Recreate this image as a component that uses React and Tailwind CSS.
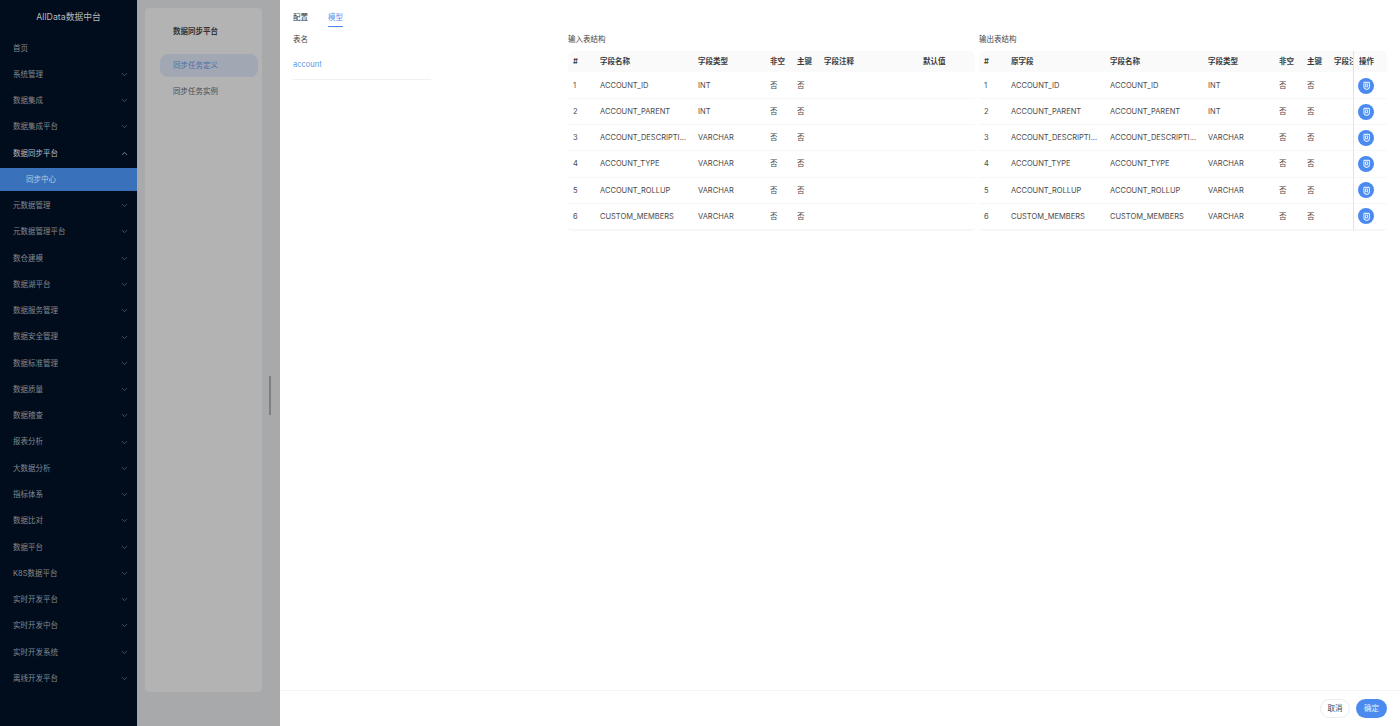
import React from "react";
import { ChevronDown, ChevronUp } from "lucide-react";

const menus = [
  "首页", "系统管理", "数据集成", "数据集成平台", "数据同步平台", "同步中心", "元数据管理", "元数据管理平台",
  "数仓建模", "数据湖平台", "数据服务管理", "数据安全管理", "数据标准管理", "数据质量", "数据稽查", "报表分析",
  "大数据分析", "指标体系", "数据比对", "数据平台", "K8S数据平台", "实时开发平台", "实时开发中台", "实时开发系统", "离线开发平台",
];

const rows = [
  ["ACCOUNT_ID", "INT"],
  ["ACCOUNT_PARENT", "INT"],
  ["ACCOUNT_DESCRIPTI...", "VARCHAR"],
  ["ACCOUNT_TYPE", "VARCHAR"],
  ["ACCOUNT_ROLLUP", "VARCHAR"],
  ["CUSTOM_MEMBERS", "VARCHAR"],
];

const Sidebar = () => (
  <div className="w-[137px] shrink-0 bg-[#010d1c] h-full">
    <div className="h-[35px] flex items-center justify-center text-[8.75px] text-[#b5b9be]">AllData数据中台</div>
    {menus.map((m, i) => {
      if (m === "同步中心") {
        return (
          <div key={m} className="h-[23px] my-[1.64px] pl-[26px] flex items-center bg-[#3a71bb] text-[#b9c9df]">
            {m}
          </div>
        );
      }
      const open = m === "数据同步平台";
      return (
        <div
          key={m}
          className={`h-[26.28px] pl-[13px] pr-[8px] flex items-center justify-between ${open ? "text-[#b8bcc1]" : "text-[#83888f]"}`}
        >
          <span>{m}</span>
          {i > 0 && (open ? <ChevronUp size={9} className="text-[#a5a9ae]" /> : <ChevronDown size={9} className="text-[#5d636c]" />)}
        </div>
      );
    })}
  </div>
);

const Backdrop = () => (
  <div className="w-[143px] shrink-0 h-full bg-[#a8a9aa] relative pt-2 pl-2">
    <div className="w-[117px] h-[684px] bg-[#b3b3b3] rounded-sm">
      <div className="h-[47px] pl-[28px] flex items-center font-semibold text-[#333537]">数据同步平台</div>
      <div className="mt-[-1px] ml-[15px] mr-1 h-[23px] rounded-lg pl-[13px] flex items-center bg-[#a2a8b3] text-[#4c6ea8]">同步任务定义</div>
      <div className="mt-[3px] h-[23px] pl-[28px] flex items-center text-[#4a4b4d]">同步任务实例</div>
    </div>
    <div className="absolute left-[132px] top-[376px] w-[2px] h-[39px] bg-[#7d7e80]" />
  </div>
);

const Cell = ({ children, head }) => (
  <div className={`flex items-center pl-[5px] whitespace-nowrap overflow-hidden ${head ? "font-semibold text-[#3a3a3a]" : "text-[#4a4a4a]"}`}>
    {children}
  </div>
);

const CopyIcon = () => (
  <svg width="9" height="9" viewBox="0 0 10 10" fill="none" stroke="#dbe8fd" strokeWidth="1.2">
    <path d="M2 1.5h5.5a.8.8 0 0 1 .8.8v4.2c0 1.2-1.6 2.6-3 2.9-1.6-.3-3.2-1.5-3.2-2.9V1.5z" />
    <rect x="3.8" y="3.4" width="2.4" height="3" rx=".4" />
  </svg>
);

const InputTable = () => (
  <div className="w-[407px] rounded-b-md border-b border-[#f5f5f5]">
    <div className="h-[21px] mb-px grid grid-cols-[27px_98px_72px_27px_27px_99px_57px] bg-[#fafafa] rounded-t-md">
      {["#", "字段名称", "字段类型", "非空", "主键", "字段注释", "默认值"].map((h) => (
        <Cell head key={h}>{h}</Cell>
      ))}
    </div>
    {rows.map((r, i) => (
      <div key={r[0]} className="h-[26.15px] grid grid-cols-[27px_98px_72px_27px_27px_99px_57px] border-b border-[#f7f7f7]">
        <Cell>{i + 1}</Cell>
        <Cell>{r[0]}</Cell>
        <Cell>{r[1]}</Cell>
        <Cell>否</Cell>
        <Cell>否</Cell>
        <Cell />
        <Cell />
      </div>
    ))}
  </div>
);

const OutputTable = () => (
  <div className="w-[408px] relative rounded-b-md border-b border-[#f5f5f5]">
    <div className="h-[21px] mb-px grid grid-cols-[27px_99px_98px_71px_28px_27px_24px] bg-[#fafafa] rounded-t-md">
      {["#", "原字段", "字段名称", "字段类型", "非空", "主键", "字段注释"].map((h) => (
        <Cell head key={h}>{h}</Cell>
      ))}
    </div>
    {rows.map((r, i) => (
      <div key={r[0]} className="h-[26.15px] grid grid-cols-[27px_99px_98px_71px_28px_27px_24px] border-b border-[#f7f7f7]">
        <Cell>{i + 1}</Cell>
        <Cell>{r[0]}</Cell>
        <Cell>{r[0]}</Cell>
        <Cell>{r[1]}</Cell>
        <Cell>否</Cell>
        <Cell>否</Cell>
        <Cell />
      </div>
    ))}
    {/* fixed action column */}
    <div className="absolute right-0 top-0 bottom-0 w-[34px] bg-white border-l border-[#e2e2e2]">
      <div className="h-[21px] mb-px flex items-center pl-[5px] font-semibold text-[#3a3a3a] bg-[#fafafa] rounded-tr-md">操作</div>
      {rows.map((r) => (
        <div key={r[0]} className="h-[26.15px] flex items-center pl-[4px] border-b border-[#f7f7f7]">
          <div className="w-4 h-4 rounded-full bg-[#4b8bf0] flex items-center justify-center">
            <CopyIcon />
          </div>
        </div>
      ))}
    </div>
  </div>
);

const Drawer = () => (
  <div className="flex-1 h-full bg-white flex flex-col text-[#444]">
    <div className="flex-1 pl-[13px] pr-[13px] min-h-0">
      <div className="h-[27px] flex gap-5 text-[#333]">
        <div className="pt-[11px] h-[27px] flex items-start leading-[13px]">配置</div>
        <div className="pt-[11px] h-[27px] flex items-start leading-[13px] border-b border-[#4b8bf0] text-[#5b93e8]">模型</div>
      </div>
      <div className="flex mt-[6px]">
        <div className="w-[275px] shrink-0">
          <div className="h-[13px] flex items-center">表名</div>
          <div className="w-[138px] h-[33px] mt-[0.5px] pt-[4px] flex items-center text-[#5b93e8] border-b border-[#f0f0f0]">account</div>
        </div>
        <div className="mr-1">
          <div className="h-[13px] mb-[5px] flex items-center">输入表结构</div>
          <InputTable />
        </div>
        <div>
          <div className="h-[13px] mb-[5px] flex items-center">输出表结构</div>
          <OutputTable />
        </div>
      </div>
    </div>
    <div className="h-[36px] shrink-0 border-t border-[#f5f5f5] flex items-center justify-end gap-[6px] pr-[13px]">
      <button className="w-[30px] h-[19px] rounded-full border border-[#ececec] text-[#444]">取消</button>
      <button className="w-[31px] h-[19px] rounded-full bg-[#4b8bf0] text-[#e8f0fd]">确定</button>
    </div>
  </div>
);

export default function App() {
  return (
    <div className="w-[1400px] h-[726px] flex overflow-hidden text-[7.5px] font-['Inter','Noto_Sans_CJK_SC',sans-serif]">
      <Sidebar />
      <Backdrop />
      <Drawer />
    </div>
  );
}
